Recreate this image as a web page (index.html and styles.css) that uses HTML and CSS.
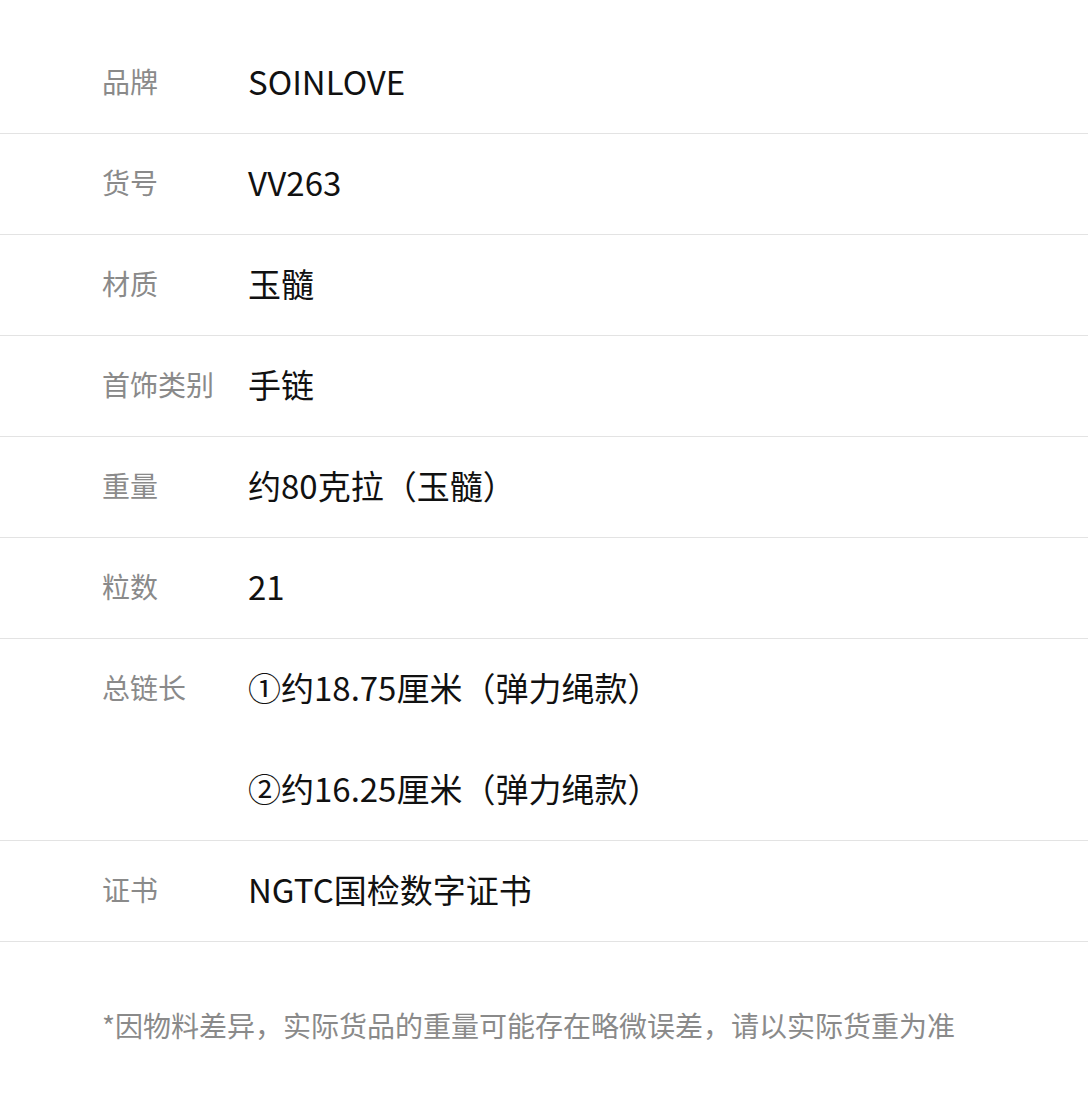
FILE: index.html
```html
<!DOCTYPE html>
<html lang="zh-CN">
<head>
<meta charset="utf-8">
<title>商品参数</title>
<link rel="stylesheet" href="styles.css">
</head>
<body>
<div class="page">
  <div class="specs">
    <div class="row"><div class="label">品牌</div><div class="value"><div class="line">SOINLOVE</div></div></div>
    <div class="row"><div class="label">货号</div><div class="value"><div class="line">VV263</div></div></div>
    <div class="row"><div class="label">材质</div><div class="value"><div class="line">玉髓</div></div></div>
    <div class="row"><div class="label">首饰类别</div><div class="value"><div class="line">手链</div></div></div>
    <div class="row"><div class="label">重量</div><div class="value"><div class="line">约80克拉（玉髓）</div></div></div>
    <div class="row"><div class="label">粒数</div><div class="value"><div class="line">21</div></div></div>
    <div class="row"><div class="label">总链长</div><div class="value"><div class="line">①约18.75厘米（弹力绳款）</div><div class="line">②约16.25厘米（弹力绳款）</div></div></div>
    <div class="row"><div class="label">证书</div><div class="value"><div class="line">NGTC国检数字证书</div></div></div>
  </div>
  <p class="note">*因物料差异，实际货品的重量可能存在略微误差，请以实际货重为准</p>
</div>
</body>
</html>
```
FILE: styles.css
```css
html, body {
  margin: 0;
  padding: 0;
  background: #ffffff;
}
body {
  font-family: "Noto Sans CJK SC", "Noto Sans", sans-serif;
}
.page {
  width: 1088px;
  padding-top: 33px;
}
.specs {
  display: flex;
  flex-direction: column;
}
.row {
  display: grid;
  grid-template-columns: 146px 1fr;
  padding-left: 102px;
  border-bottom: 1px solid #e3e3e3;
}
.label {
  font-size: 28px;
  line-height: 96px;
  padding-bottom: 4px;
  color: #8a8a8a;
  white-space: nowrap;
}
.value {
  display: flex;
  flex-direction: column;
  gap: 1px;
}
.line {
  font-size: 33px;
  line-height: 96px;
  padding-bottom: 4px;
  color: #111111;
  white-space: nowrap;
}
.note {
  margin: 0;
  padding: 63px 0 0 102px;
  font-size: 28px;
  line-height: 40px;
  color: #8a8a8a;
  white-space: nowrap;
}
```
